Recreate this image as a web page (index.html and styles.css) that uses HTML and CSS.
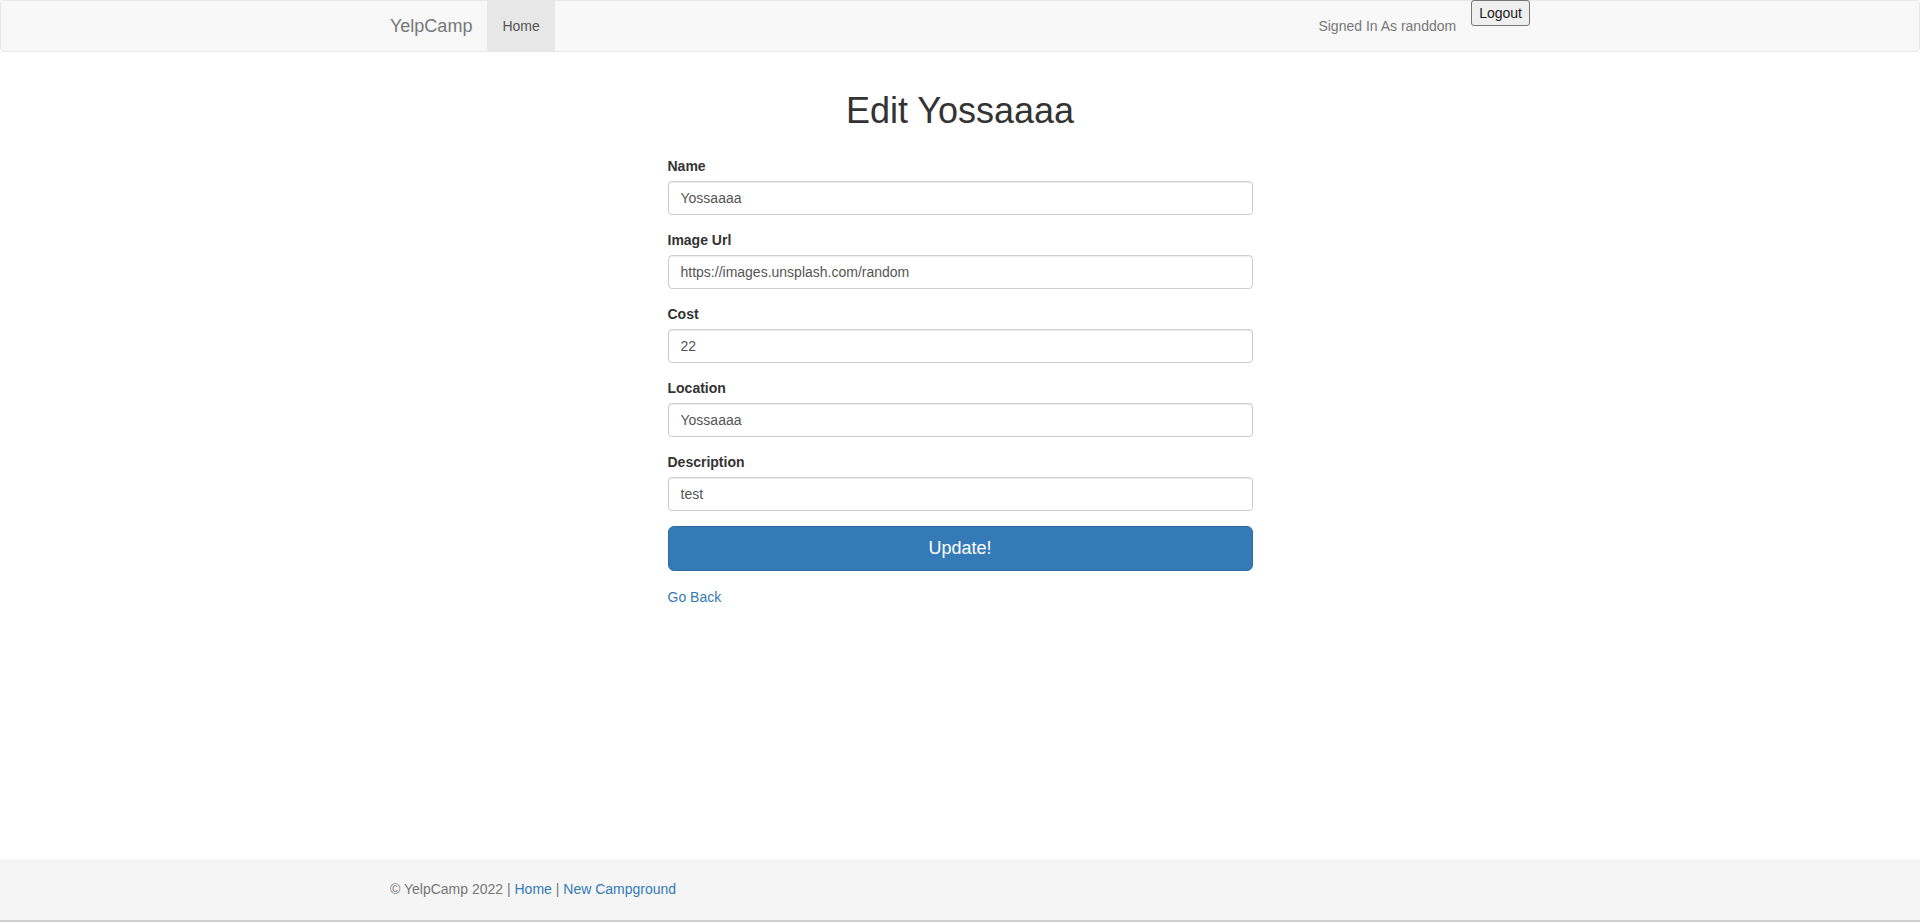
FILE: index.html
```html
<!DOCTYPE html>
<html lang="en">
<head>
<meta charset="utf-8">
<title>YelpCamp</title>
<link rel="stylesheet" href="styles.css">
</head>
<body>
<nav class="navbar">
  <div class="nav-container">
    <div class="nav-left">
      <a class="brand" href="#">YelpCamp</a>
      <a class="nav-link active" href="#">Home</a>
    </div>
    <div class="nav-right">
      <span class="nav-text">Signed In As randdom</span>
      <button class="logout" type="button">Logout</button>
    </div>
  </div>
</nav>
<main class="main">
  <h1 class="title">Edit Yossaaaa</h1>
  <form class="edit-form">
    <div class="form-group">
      <label class="label">Name</label>
      <input class="input" type="text" value="Yossaaaa">
    </div>
    <div class="form-group">
      <label class="label">Image Url</label>
      <input class="input" type="text" value="https://images.unsplash.com/random">
    </div>
    <div class="form-group">
      <label class="label">Cost</label>
      <input class="input" type="text" value="22">
    </div>
    <div class="form-group">
      <label class="label">Location</label>
      <input class="input" type="text" value="Yossaaaa">
    </div>
    <div class="form-group">
      <label class="label">Description</label>
      <input class="input" type="text" value="test">
    </div>
    <button class="submit" type="button">Update!</button>
    <a class="back" href="#">Go Back</a>
  </form>
</main>
<footer class="footer">
  <div class="footer-container">
    © YelpCamp 2022 | <a class="link" href="#">Home</a> | <a class="link" href="#">New Campground</a>
  </div>
</footer>
</body>
</html>
```
FILE: styles.css
```css
* { box-sizing: border-box; }
html, body { margin: 0; padding: 0; }
body {
  font-family: "Liberation Sans", Arial, sans-serif;
  font-size: 14px;
  line-height: 20px;
  color: #333;
  background: #fff;
  height: 922px;
  display: flex;
  flex-direction: column;
  overflow: hidden;
}
a { text-decoration: none; }

.navbar {
  background: #f8f8f8;
  border: 1px solid #e7e7e7;
  border-radius: 4px;
  height: 52px;
  flex: none;
}
.nav-container {
  width: 1170px;
  margin: 0 auto;
  padding: 0 15px;
  height: 50px;
  display: flex;
  justify-content: space-between;
}
.nav-left { display: flex; margin-left: -15px; }
.brand {
  padding: 15px;
  font-size: 18px;
  line-height: 20px;
  color: #777;
  height: 50px;
}
.nav-link {
  padding: 15px;
  color: #555;
  line-height: 20px;
  height: 50px;
}
.nav-link.active { background: #e7e7e7; }
.nav-right { display: flex; align-items: flex-start; }
.nav-text {
  color: #777;
  margin: 15px 15px 0 15px;
  line-height: 20px;
}
.logout {
  margin-top: -1px;
  height: 26px;
  padding: 1px 7px;
  font-family: "Liberation Sans", Arial, sans-serif;
  font-size: 14px;
  color: #222;
  background: #efefef;
  border: 1px solid #767676;
  border-radius: 3px;
}

.main {
  flex: 1;
  padding-top: 39px;
}
.title {
  margin: 0;
  font-size: 36px;
  font-weight: 500;
  line-height: 1.1;
  text-align: center;
  color: #333;
}
.edit-form {
  width: 585px;
  margin: 25px auto 0;
  display: flex;
  flex-direction: column;
}
.form-group {
  display: flex;
  flex-direction: column;
  margin-bottom: 15px;
}
.label {
  font-weight: 700;
  margin-bottom: 5px;
  line-height: 20px;
}
.input {
  height: 34px;
  padding: 6px 12px;
  font-family: "Liberation Sans", Arial, sans-serif;
  font-size: 14px;
  line-height: 20px;
  color: #555;
  background: #fff;
  border: 1px solid #ccc;
  border-radius: 4px;
  box-shadow: inset 0 1px 1px rgba(0,0,0,.075);
}
.submit {
  height: 45px;
  padding: 10px 16px;
  font-family: "Liberation Sans", Arial, sans-serif;
  font-size: 18px;
  line-height: 23px;
  color: #fff;
  background: #337ab7;
  border: 1px solid #2e6da4;
  border-radius: 6px;
}
.back {
  margin-top: 16px;
  color: #337ab7;
  align-self: flex-start;
}

.footer {
  flex: none;
  height: 63px;
  background: #f5f5f5;
  border-bottom: 2px solid #cfcfcf;
  padding-top: 20px;
}
.footer-container {
  width: 1170px;
  margin: 0 auto;
  padding: 0 15px;
  color: #777;
}
.link { color: #337ab7; }
```
